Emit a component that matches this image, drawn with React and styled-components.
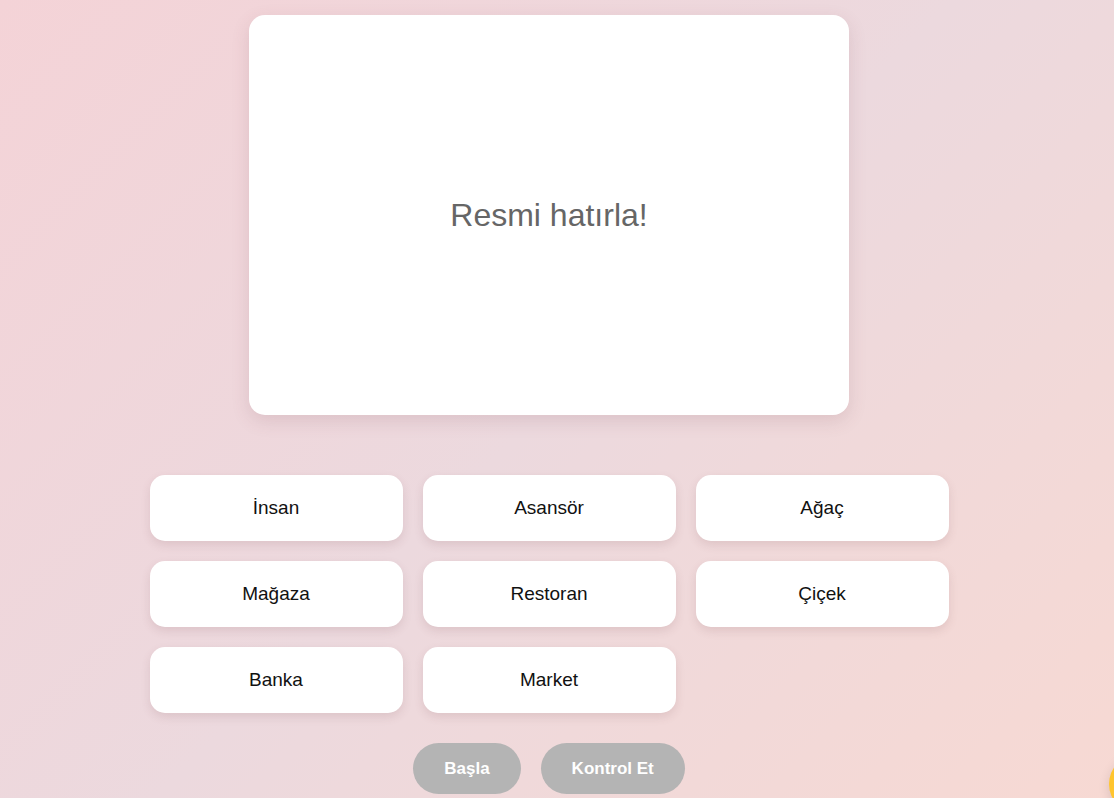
import React from "react";
import styled, { createGlobalStyle } from "styled-components";

const Global = createGlobalStyle`
  html, body { margin: 0; padding: 0; }
  body {
    min-height: 100vh;
    font-family: "Liberation Sans", Arial, sans-serif;
    background: linear-gradient(135deg, #f4d3d7 0%, #ecd9de 50%, #f7d9d3 100%);
    background-attachment: fixed;
    overflow: hidden;
  }
`;

const Page = styled.div`
  display: flex;
  flex-direction: column;
  align-items: center;
  width: 1098px;
  padding-top: 15px;
`;

const Card = styled.div`
  width: 600px;
  height: 400px;
  background: #fff;
  border-radius: 16px;
  box-shadow: 0 6px 18px rgba(120, 70, 80, 0.15);
  display: flex;
  align-items: center;
  justify-content: center;
  margin-bottom: 60px;
`;

const Prompt = styled.span`
  font-size: 32px;
  color: #666;
`;

const Grid = styled.div`
  display: grid;
  grid-template-columns: repeat(3, 253px);
  gap: 20px;
`;

const Option = styled.button`
  height: 66px;
  border: none;
  border-radius: 15px;
  background: #fff;
  box-shadow: 0 4px 10px rgba(120, 70, 80, 0.14);
  font-family: "Liberation Sans", Arial, sans-serif;
  font-size: 19px;
  color: #111;
  cursor: pointer;
`;

const Controls = styled.div`
  display: flex;
  gap: 20px;
  margin-top: 30px;
`;

const Control = styled.button`
  border: none;
  border-radius: 26px;
  background: #b4b4b4;
  color: #fff;
  font-family: "Liberation Sans", Arial, sans-serif;
  font-weight: bold;
  font-size: 17px;
  line-height: 21px;
  padding: 15px 31px;
  cursor: pointer;
`;

const Floating = styled.div`
  position: fixed;
  left: 1109px;
  top: 754px;
  width: 60px;
  height: 60px;
  border-radius: 50%;
  background: #ffc52e;
  box-shadow: 0 4px 12px rgba(0, 0, 0, 0.12);
`;

const words = ["İnsan", "Asansör", "Ağaç", "Mağaza", "Restoran", "Çiçek", "Banka", "Market"];

export default function App() {
  return (
    <>
      <Global />
      <Page>
        <Card>
          <Prompt>Resmi hatırla!</Prompt>
        </Card>
        <Grid>
          {words.map((w) => (
            <Option key={w}>{w}</Option>
          ))}
        </Grid>
        <Controls>
          <Control>Başla</Control>
          <Control>Kontrol Et</Control>
        </Controls>
      </Page>
      <Floating />
    </>
  );
}
